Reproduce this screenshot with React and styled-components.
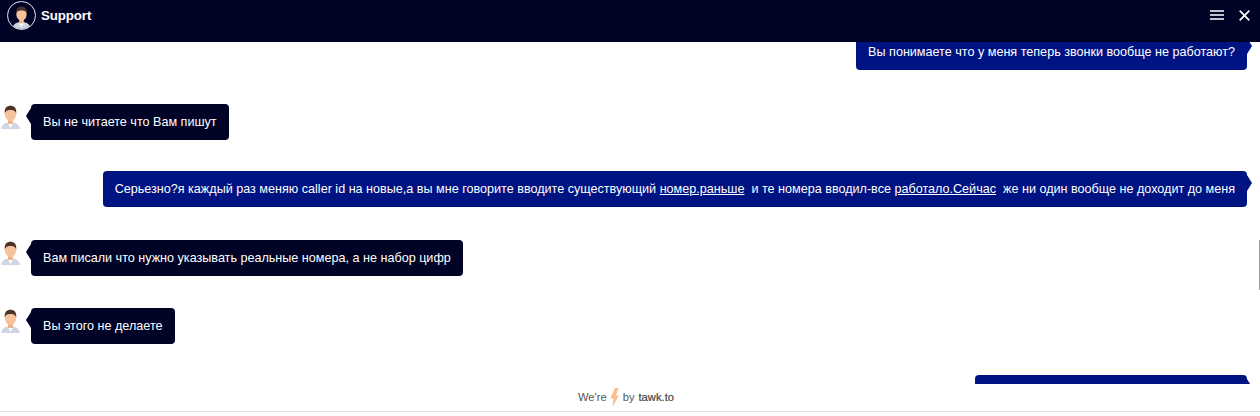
import React from "react";
import styled, { createGlobalStyle } from "styled-components";

const Global = createGlobalStyle`
  html, body { margin: 0; padding: 0; background: #fff; overflow: hidden; }
  * { box-sizing: border-box; }
`;

const Frame = styled.div`
  width: 1260px;
  height: 416px;
  display: flex;
  flex-direction: column;
  position: relative;
  font-family: "Liberation Sans", Arial, sans-serif;
  background: #fff;
`;

const Header = styled.header`
  flex: 0 0 42px;
  background: #000326;
  display: flex;
  align-items: flex-start;
  justify-content: space-between;
  padding: 0 10px 0 7px;
  color: #fff;
  position: relative;
  z-index: 2;
`;

const Identity = styled.div`
  display: flex;
  align-items: center;
  gap: 5px;
  height: 30px;
`;

const Title = styled.span`
  font-size: 13.3px;
  font-weight: 700;
  letter-spacing: -0.1px;
`;

const AvatarRing = styled.div`
  width: 29px;
  height: 29px;
  border-radius: 50%;
  border: 1px solid #e8e8f0;
  overflow: hidden;
  display: flex;
`;

const Actions = styled.div`
  display: flex;
  align-items: center;
  gap: 15px;
  height: 30px;
`;

const Viewport = styled.main`
  flex: 0 0 342px;
  overflow: hidden;
`;

const Track = styled.div`
  display: flex;
  flex-direction: column;
  margin-top: -8px;
  padding: 0 13px 0 0;
`;

const Row = styled.div`
  display: flex;
  align-items: flex-start;
  justify-content: ${(p) => (p.$mine ? "flex-end" : "flex-start")};
  margin-top: ${(p) => p.$gap || 0}px;
`;

const SmallAvatar = styled.div`
  width: 21px;
  height: 24px;
  margin-top: 1px;
  margin-right: 10px;
  flex: none;
  display: flex;
`;

const Bubble = styled.div`
  position: relative;
  min-height: 36px;
  padding: 10px 12px;
  border-radius: 4px;
  font-size: 12.6px;
  line-height: 16px;
  color: #fff;
  white-space: pre;
  background: ${(p) => (p.$mine ? "#001382" : "#000326")};

  &::after {
    content: "";
    position: absolute;
    top: 4px;
    width: 5px;
    height: 16px;
    background: inherit;
    ${(p) =>
      p.$mine
        ? "right: -5px; clip-path: polygon(0 0, 100% 50%, 0 100%);"
        : "left: -5px; clip-path: polygon(100% 0, 0 50%, 100% 100%);"}
  }
`;

const Link = styled.a`
  color: #fff;
  text-decoration: underline;
`;

const Footer = styled.footer`
  flex: 0 0 28px;
  border-bottom: 1px solid #e2e2e2;
  background: #fff;
  display: flex;
  align-items: center;
  justify-content: center;
  font-size: 11.2px;
  color: #555;
  padding: 0 8px 1px 0;
  position: relative;
  z-index: 2;
`;

const Brand = styled.span`
  color: #444;
  -webkit-text-stroke: 0.2px #444;
  margin-left: 4px;
`;

const Bolt = styled.svg`
  margin: 0 4px 0 3px;
  flex: none;
`;

const ScrollThumb = styled.div`
  position: absolute;
  right: 0;
  top: 240px;
  width: 1px;
  height: 50px;
  background: #9c9c9c;
`;

const PersonArt = () => (
  <>
    <path d="M1 26c0-6 3-8.500 9.500-8.500S20 20 20 26z" fill="#cdd5e3" />
    <path d="M7.500 18l3 5 3-5z" fill="#fff" />
    <rect x="8" y="13" width="5" height="6" fill="#eeb48a" />
    <ellipse cx="10.500" cy="9" rx="5.600" ry="7" fill="#f8c29a" />
    <path d="M4.800 9C4 3 7 .8 10.500 .8S17 3 16.200 9c-.5-2.500-1.700-4-5.700-4s-5.200 1.500-5.700 4z" fill="#4a3328" />
  </>
);

const HeaderPerson = () => (
  <svg width="27" height="27" viewBox="-4 -4 29 29" aria-hidden="true"><PersonArt /></svg>
);

const RowPerson = () => (
  <svg width="21" height="24" viewBox="0 0 21 24" aria-hidden="true"><PersonArt /></svg>
);

const Hamburger = () => (
  <svg width="14" height="10" viewBox="0 0 14 10" aria-hidden="true">
    <path d="M0 1h14M0 5h14M0 9h14" stroke="#fff" strokeWidth="1.500" />
  </svg>
);

const Close = () => (
  <svg width="11" height="11" viewBox="0 0 11 11" aria-hidden="true">
    <path d="M.7.700l9.600 9.600M10.300.700L.7 10.300" stroke="#fff" strokeWidth="1.700" />
  </svg>
);

export default function App() {
  return (
    <Frame>
      <Global />
      <Header>
        <Identity>
          <AvatarRing><HeaderPerson /></AvatarRing>
          <Title>Support</Title>
        </Identity>
        <Actions>
          <Hamburger />
          <Close />
        </Actions>
      </Header>
      <Viewport>
        <Track>
          <Row $mine>
            <Bubble $mine>Вы понимаете что у меня теперь звонки вообще не работают?</Bubble>
          </Row>
          <Row $gap={34}>
            <SmallAvatar><RowPerson /></SmallAvatar>
            <Bubble>Вы не читаете что Вам пишут</Bubble>
          </Row>
          <Row $mine $gap={31}>
            <Bubble $mine>
              Серьезно?я каждый раз меняю caller id на новые,а вы мне говорите вводите существующий <Link>номер.раньше</Link>  и те номера вводил-все <Link>работало.Сейчас</Link>  же ни один вообще не доходит до меня
            </Bubble>
          </Row>
          <Row $gap={33}>
            <SmallAvatar><RowPerson /></SmallAvatar>
            <Bubble>Вам писали что нужно указывать реальные номера, а не набор цифр</Bubble>
          </Row>
          <Row $gap={32}>
            <SmallAvatar><RowPerson /></SmallAvatar>
            <Bubble>Вы этого не делаете</Bubble>
          </Row>
          <Row $mine $gap={31}>
            <Bubble $mine style={{ width: 272 }} />
          </Row>
        </Track>
      </Viewport>
      <Footer>
        We're
        <Bolt width="9" height="19" viewBox="0 0 9 19" aria-hidden="true">
          <path d="M5 0L.3 10.500h3.200L2.500 19 8.800 7.500H6L8.500 0z" fill="#f8c090" />
        </Bolt>
        by <Brand>tawk.to</Brand>
      </Footer>
      <ScrollThumb />
    </Frame>
  );
}
